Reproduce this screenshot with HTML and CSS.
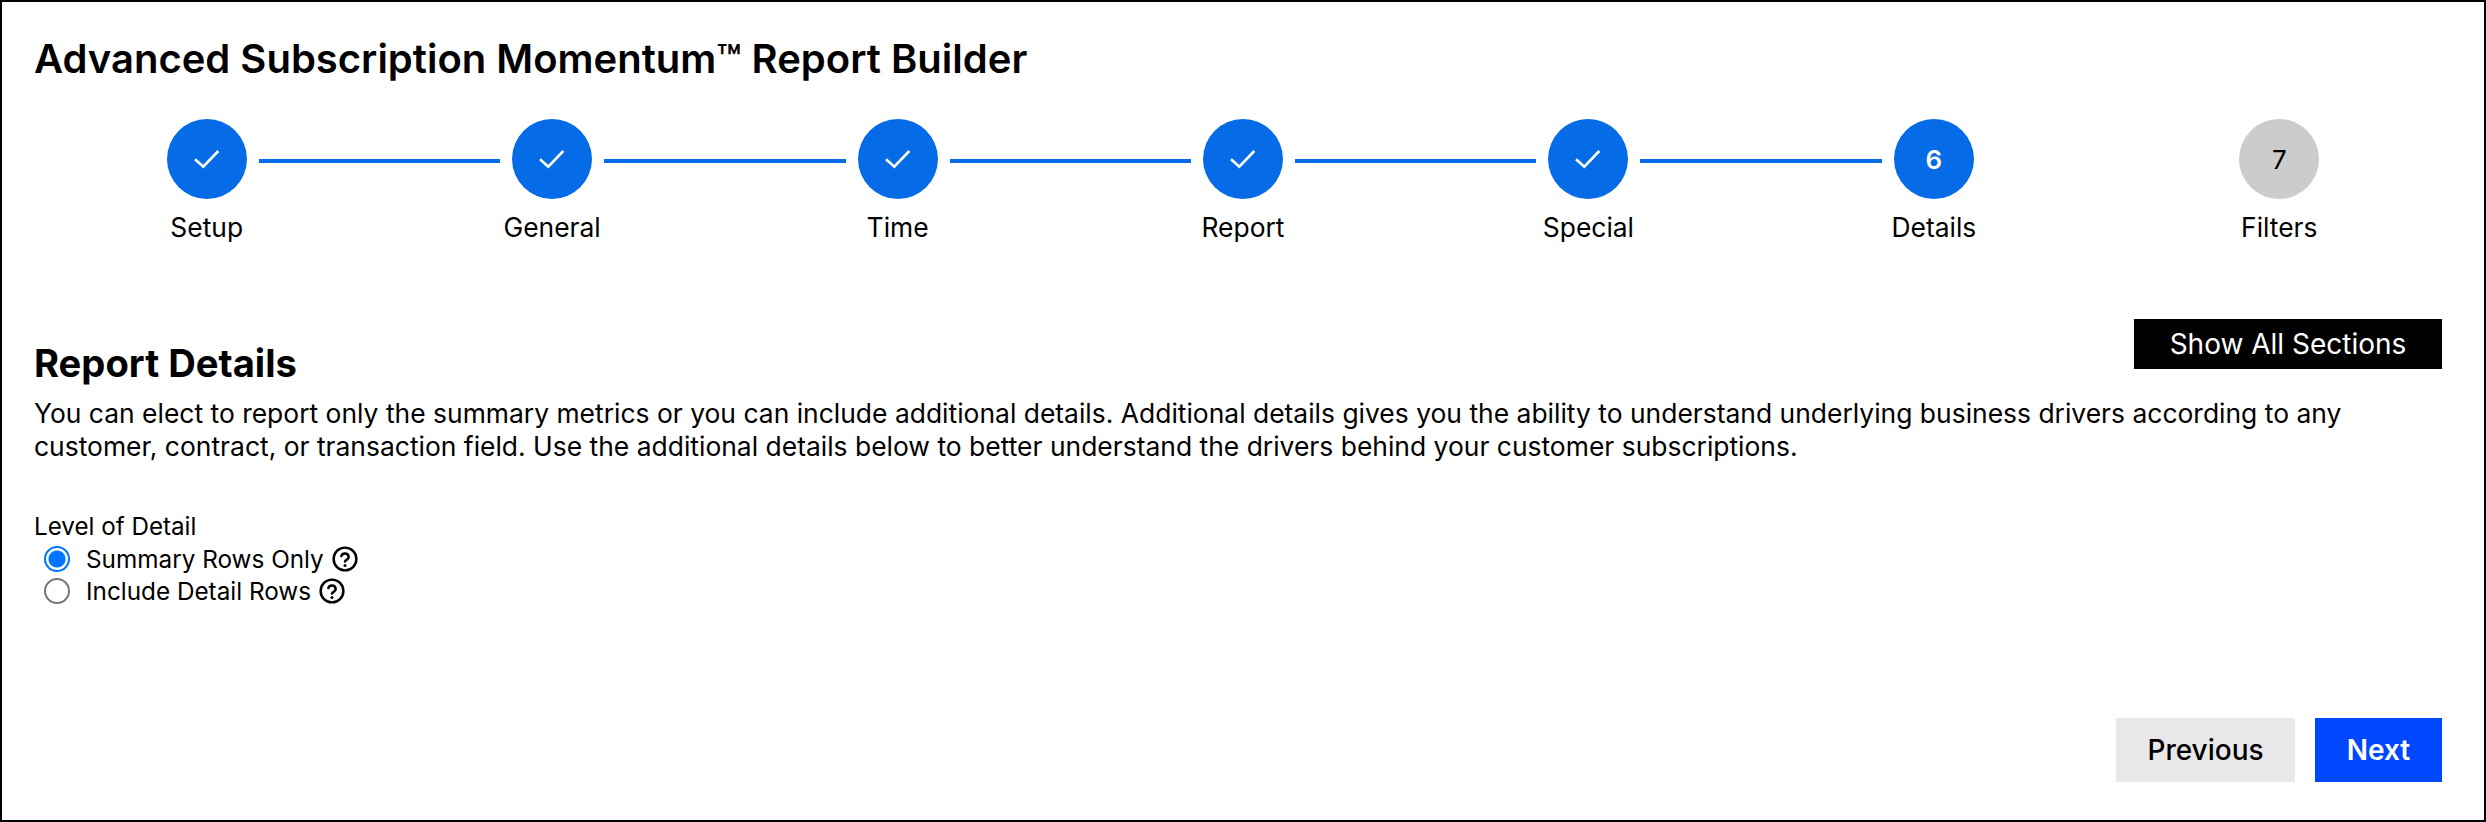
FILE: index.html
```html
<!DOCTYPE html>
<html lang="en">
<head>
    <meta charset="UTF-8">
    <title>Report Builder</title>
    <link rel="stylesheet" href="styles.css">
</head>
<body>
<div class="page">
    <h1 class="title">Advanced Subscription Momentum™ Report Builder</h1>

    <div class="stepper">
        <div class="track">
            <span class="dot done"><svg class="check" viewBox="0 0 32 32"><path d="M4 16.3L12.3 23.7L27.3 8"/></svg></span>
            <span class="rail"></span>
            <span class="dot done"><svg class="check" viewBox="0 0 32 32"><path d="M4 16.3L12.3 23.7L27.3 8"/></svg></span>
            <span class="rail"></span>
            <span class="dot done"><svg class="check" viewBox="0 0 32 32"><path d="M4 16.3L12.3 23.7L27.3 8"/></svg></span>
            <span class="rail"></span>
            <span class="dot done"><svg class="check" viewBox="0 0 32 32"><path d="M4 16.3L12.3 23.7L27.3 8"/></svg></span>
            <span class="rail"></span>
            <span class="dot done"><svg class="check" viewBox="0 0 32 32"><path d="M4 16.3L12.3 23.7L27.3 8"/></svg></span>
            <span class="rail"></span>
            <span class="dot current">6</span>
            <span class="rail rail-empty"></span>
            <span class="dot todo">7</span>
        </div>
        <ul class="labels">
            <li>Setup</li>
            <li>General</li>
            <li>Time</li>
            <li>Report</li>
            <li>Special</li>
            <li>Details</li>
            <li>Filters</li>
        </ul>
    </div>

    <div class="section-head">
        <h2 class="section-title">Report Details</h2>
        <button class="btn btn-dark" type="button">Show All Sections</button>
    </div>
    <p class="intro">You can elect to report only the summary metrics or you can include additional details. Additional details gives you the ability to understand underlying business drivers according to any customer, contract, or transaction field. Use the additional details below to better understand the drivers behind your customer subscriptions.</p>

    <div class="field">
        <div class="field-label">Level of Detail</div>
        <label class="option">
            <input class="radio" type="radio" name="detail" checked>
            <span>Summary Rows Only</span>
            <svg class="help" viewBox="0 0 24 24"><circle cx="12" cy="12" r="10.5"/><path d="M8.6 9.2a3.5 3.5 0 0 1 6.8 1.1c0 2.3-3.4 2.9-3.4 4"/><path class="help-dot" d="M12 17.9v.1"/></svg>
        </label>
        <label class="option">
            <input class="radio" type="radio" name="detail">
            <span>Include Detail Rows</span>
            <svg class="help" viewBox="0 0 24 24"><circle cx="12" cy="12" r="10.5"/><path d="M8.6 9.2a3.5 3.5 0 0 1 6.8 1.1c0 2.3-3.4 2.9-3.4 4"/><path class="help-dot" d="M12 17.9v.1"/></svg>
        </label>
    </div>

    <div class="actions">
        <button class="btn btn-grey" type="button">Previous</button>
        <button class="btn btn-blue" type="button">Next</button>
    </div>
</div>
</body>
</html>
```
FILE: styles.css
```css
* {
    box-sizing: border-box;
}

html, body, h1, h2, p, ul {
    margin: 0;
    padding: 0;
}

body {
    font-family: Inter, "Liberation Sans", sans-serif;
    color: #000;
    background: #fff;
}

.page {
    display: flex;
    flex-direction: column;
    height: 822px;
    padding: 0 32px 36px;
    border: 2px solid #000;
}

.title {
    margin-top: 33px;
    font-size: 40px;
    line-height: 48px;
    font-weight: 600;
}

.stepper {
    margin-top: 36px;
}

.track {
    display: flex;
    align-items: flex-start;
    padding: 0 132.7px;
}

.dot {
    flex: none;
    display: flex;
    align-items: center;
    justify-content: center;
    width: 80px;
    height: 80px;
    border-radius: 50%;
    font-size: 26px;
    font-weight: 600;
}

.done, .current {
    background: #056be6;
    color: #fff;
}

.todo {
    background: #ccc;
    font-weight: 400;
}

.check {
    width: 32px;
    height: 32px;
    fill: none;
    stroke: #fff;
    stroke-width: 2.6;
}

.rail {
    flex: 1;
    height: 4px;
    margin: 40px 12px 0;
    background: #056be6;
}

.rail-empty {
    background: none;
}

.labels {
    display: grid;
    grid-template-columns: repeat(7, 1fr);
    margin-top: 12px;
    list-style: none;
    font-size: 26.4px;
    line-height: 32px;
    text-align: center;
}

.section-head {
    display: flex;
    justify-content: space-between;
    align-items: flex-end;
    margin-top: 76px;
    padding-right: 10px;
}

.section-title {
    font-size: 38.2px;
    line-height: 46px;
    font-weight: 700;
}

.btn {
    border: 0;
    font-family: inherit;
    font-size: 28px;
    color: #000;
}

.btn-dark {
    width: 308px;
    height: 50px;
    margin-bottom: 17px;
    background: #000;
    color: #fff;
}

.intro {
    margin-top: 11px;
    padding-right: 90px;
    font-size: 26.45px;
    line-height: 33px;
}

.field {
    margin-top: 48px;
}

.field-label {
    font-size: 24.2px;
    line-height: 32px;
}

.option {
    display: flex;
    align-items: center;
    height: 32px;
    padding-left: 10px;
    font-size: 24.3px;
}

.radio {
    appearance: none;
    flex: none;
    width: 26px;
    height: 26px;
    margin: 0 16px 0 0;
    border: 2px solid #767676;
    border-radius: 50%;
    background: #fff;
}

.radio:checked {
    border-color: #0075ff;
    background: radial-gradient(circle, #0075ff 8px, #fff 9px);
}

.help {
    flex: none;
    width: 26px;
    height: 26px;
    margin-left: 8px;
    fill: none;
    stroke: #000;
    stroke-width: 2.3;
    stroke-linecap: round;
}

.help-dot {
    stroke-width: 2.8;
}

.actions {
    display: flex;
    justify-content: flex-end;
    gap: 20px;
    margin-top: auto;
    padding-right: 10px;
    padding-bottom: 2px;
}

.btn-grey {
    width: 179px;
    height: 64px;
    background: #e8e8e8;
    font-weight: 500;
}

.btn-blue {
    width: 127px;
    height: 64px;
    background: #0048ff;
    color: #fff;
    font-weight: 600;
}
```
